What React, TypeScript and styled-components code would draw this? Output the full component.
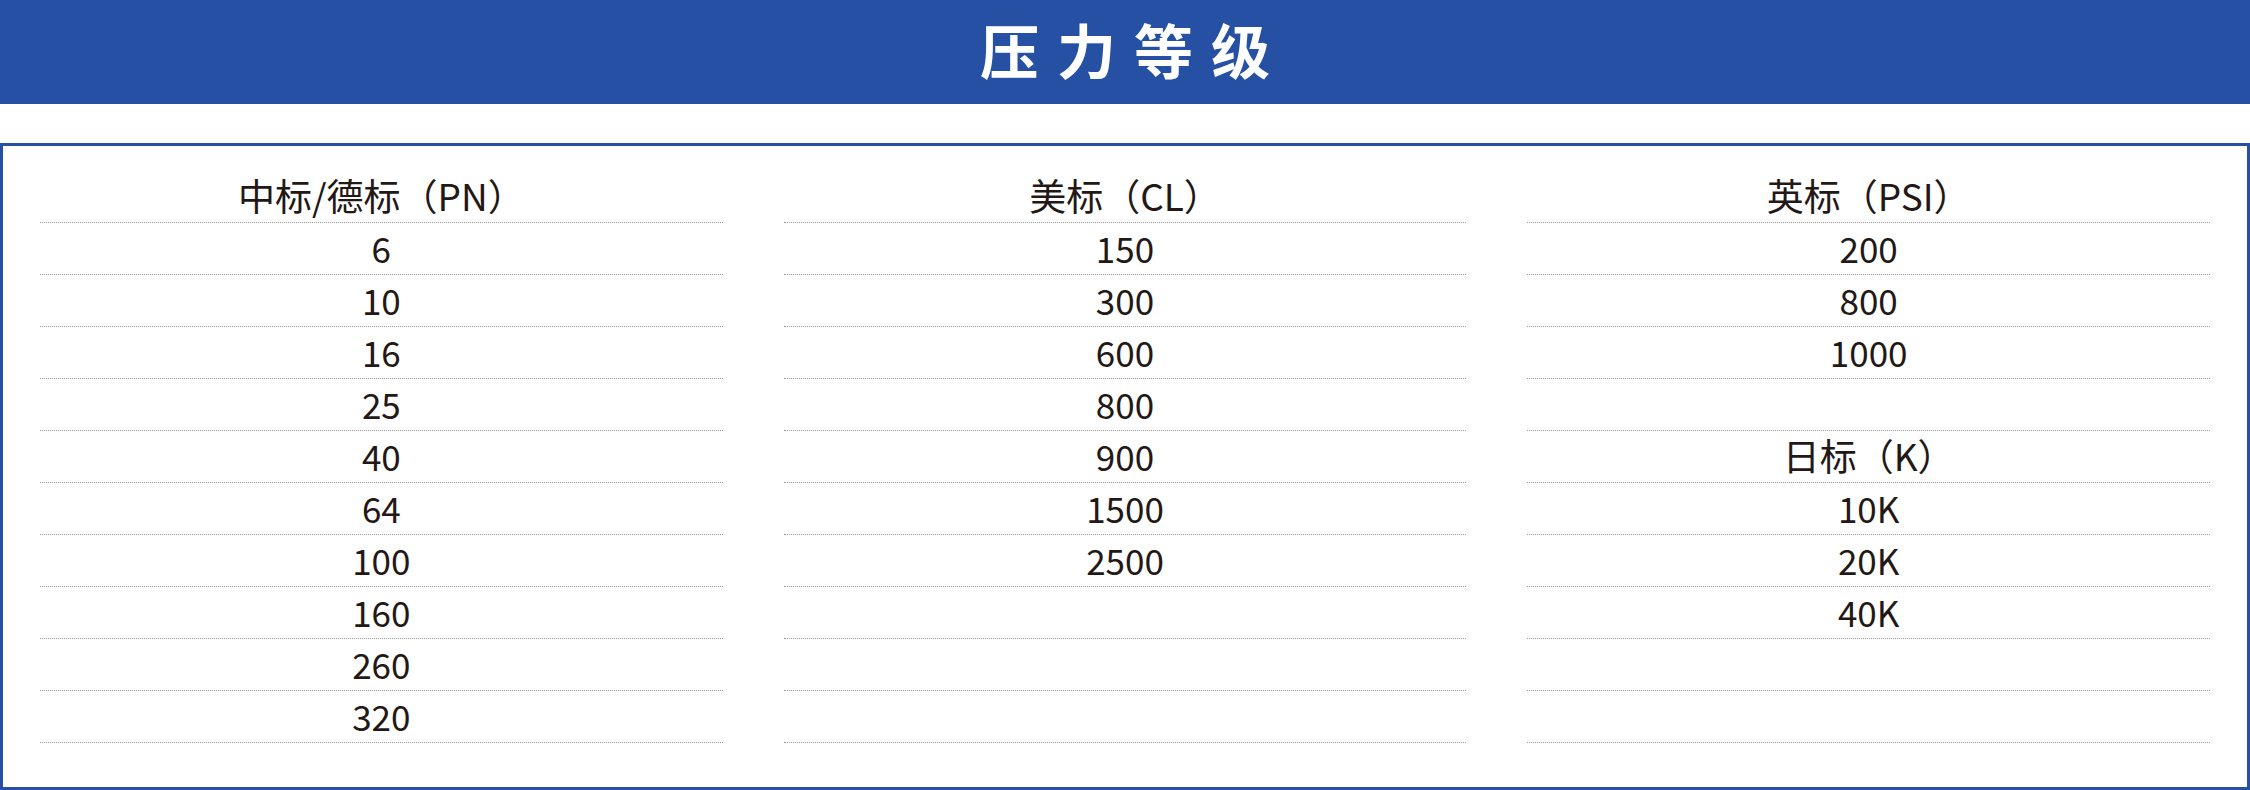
import styled, { createGlobalStyle } from 'styled-components'

const GlobalStyle = createGlobalStyle`
  html, body {
    margin: 0;
    padding: 0;
    background: #ffffff;
  }
  body {
    font-family: "Noto Sans CJK SC", "Noto Sans", sans-serif;
    color: #231815;
  }
`

const Page = styled.div`
  width: 2250px;
  height: 790px;
  display: flex;
  flex-direction: column;
  gap: 39px;
  overflow: hidden;
`

const TitleBar = styled.header`
  height: 104px;
  background: #2550a3;
  display: flex;
  align-items: center;
  justify-content: center;
`

const Title = styled.h1`
  margin: 0 0 8px;
  padding-left: 18px;
  color: #ffffff;
  font-size: 59px;
  font-weight: 700;
  letter-spacing: 18px;
  line-height: 1;
`

const Panel = styled.section`
  flex: 1;
  box-sizing: border-box;
  border: 3px solid #2550a3;
  padding: 25px 37px 0;
  display: grid;
  grid-template-columns: repeat(3, 1fr);
  column-gap: 61px;
  align-content: start;
`

const Column = styled.div`
  display: flex;
  flex-direction: column;
`

const Cell = styled.div<{ $head?: boolean }>`
  height: 52px;
  box-sizing: border-box;
  border-bottom: 1px dotted #9a9a9a;
  display: flex;
  align-items: center;
  justify-content: center;
  font-size: ${({ $head }) => ($head ? '37px' : '35px')};
  line-height: 1;
  padding-bottom: ${({ $head }) => ($head ? '3px' : '2px')};
`

type Entry = { text: string; head?: boolean }

const columns: Entry[][] = [
  [
    { text: '中标/德标（PN）', head: true },
    { text: '6' },
    { text: '10' },
    { text: '16' },
    { text: '25' },
    { text: '40' },
    { text: '64' },
    { text: '100' },
    { text: '160' },
    { text: '260' },
    { text: '320' },
  ],
  [
    { text: '美标（CL）', head: true },
    { text: '150' },
    { text: '300' },
    { text: '600' },
    { text: '800' },
    { text: '900' },
    { text: '1500' },
    { text: '2500' },
    { text: '' },
    { text: '' },
    { text: '' },
  ],
  [
    { text: '英标（PSI）', head: true },
    { text: '200' },
    { text: '800' },
    { text: '1000' },
    { text: '' },
    { text: '日标（K）', head: true },
    { text: '10K' },
    { text: '20K' },
    { text: '40K' },
    { text: '' },
    { text: '' },
  ],
]

export default function App() {
  return (
    <>
      <GlobalStyle />
      <Page>
        <TitleBar>
          <Title>压力等级</Title>
        </TitleBar>
        <Panel>
          {columns.map((col, i) => (
            <Column key={i}>
              {col.map((entry, j) => (
                <Cell key={j} $head={entry.head}>
                  {entry.text}
                </Cell>
              ))}
            </Column>
          ))}
        </Panel>
      </Page>
    </>
  )
}
